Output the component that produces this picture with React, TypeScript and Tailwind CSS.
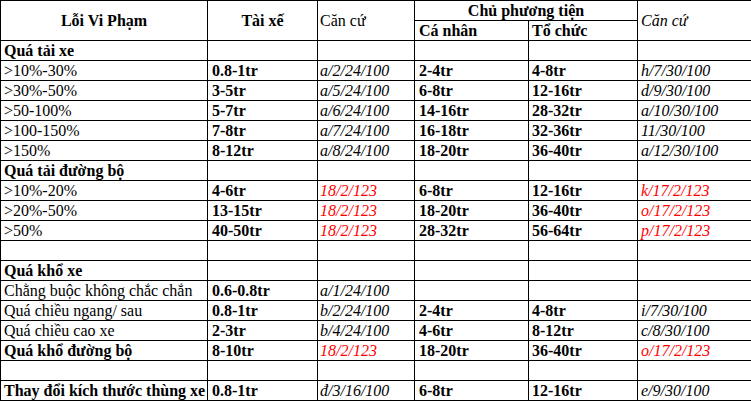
type Row = {
  name: string;
  nameBold?: boolean;
  driver?: string;
  ref?: string;
  refRed?: boolean;
  person?: string;
  org?: string;
  ref2?: string;
  ref2Red?: boolean;
};

const rows: Row[] = [
  { name: "Quá tải xe", nameBold: true },
  { name: ">10%-30%", driver: "0.8-1tr", ref: "a/2/24/100", person: "2-4tr", org: "4-8tr", ref2: "h/7/30/100" },
  { name: ">30%-50%", driver: "3-5tr", ref: "a/5/24/100", person: "6-8tr", org: "12-16tr", ref2: "d/9/30/100" },
  { name: ">50-100%", driver: "5-7tr", ref: "a/6/24/100", person: "14-16tr", org: "28-32tr", ref2: "a/10/30/100" },
  { name: ">100-150%", driver: "7-8tr", ref: "a/7/24/100", person: "16-18tr", org: "32-36tr", ref2: "11/30/100" },
  { name: ">150%", driver: "8-12tr", ref: "a/8/24/100", person: "18-20tr", org: "36-40tr", ref2: "a/12/30/100" },
  { name: "Quá tải đường bộ", nameBold: true },
  { name: ">10%-20%", driver: "4-6tr", ref: "18/2/123", refRed: true, person: "6-8tr", org: "12-16tr", ref2: "k/17/2/123", ref2Red: true },
  { name: ">20%-50%", driver: "13-15tr", ref: "18/2/123", refRed: true, person: "18-20tr", org: "36-40tr", ref2: "o/17/2/123", ref2Red: true },
  { name: ">50%", driver: "40-50tr", ref: "18/2/123", refRed: true, person: "28-32tr", org: "56-64tr", ref2: "p/17/2/123", ref2Red: true },
  { name: "" },
  { name: "Quá khổ xe", nameBold: true },
  { name: "Chằng buộc không chắc chắn", driver: "0.6-0.8tr", ref: "a/1/24/100" },
  { name: "Quá chiều ngang/ sau", driver: "0.8-1tr", ref: "b/2/24/100", person: "2-4tr", org: "4-8tr", ref2: "i/7/30/100" },
  { name: "Quá chiều cao xe", driver: "2-3tr", ref: "b/4/24/100", person: "4-6tr", org: "8-12tr", ref2: "c/8/30/100" },
  { name: "Quá khổ đường bộ", nameBold: true, driver: "8-10tr", ref: "18/2/123", refRed: true, person: "18-20tr", org: "36-40tr", ref2: "o/17/2/123", ref2Red: true },
  { name: "" },
  { name: "Thay đổi kích thước thùng xe", nameBold: true, driver: "0.8-1tr", ref: "đ/3/16/100", person: "6-8tr", org: "12-16tr", ref2: "e/9/30/100" },
];

const cell = "border border-black h-[20px] p-0 align-middle whitespace-nowrap overflow-hidden";

export default function App() {
  return (
    <div className="w-[751px] h-[401px] bg-white text-black overflow-hidden" style={{ fontFamily: '"Liberation Serif", "Times New Roman", serif' }}>
      <table className="table-fixed border-collapse text-[16px] leading-[19px] w-[751px]">
        <colgroup>
          <col className="w-[207px]" />
          <col className="w-[110px]" />
          <col className="w-[97px]" />
          <col className="w-[114px]" />
          <col className="w-[109px]" />
          <col className="w-[114px]" />
        </colgroup>
        <thead>
          <tr>
            <th rowSpan={2} className={`${cell} text-center font-bold`}>Lỗi Vi Phạm</th>
            <th rowSpan={2} className={`${cell} text-center font-bold`}>Tài xế</th>
            <th rowSpan={2} className={`${cell} text-left font-normal pl-[2px]`}>Căn cứ</th>
            <th colSpan={2} className={`${cell} text-center font-bold`}>Chủ phương tiện</th>
            <th rowSpan={2} className={`${cell} text-left font-normal italic pl-[3px]`}>Căn cứ</th>
          </tr>
          <tr>
            <th className={`${cell} text-left font-bold pl-[4px]`}>Cá nhân</th>
            <th className={`${cell} text-left font-bold pl-[3px]`}>Tổ chức</th>
          </tr>
        </thead>
        <tbody>
          {rows.map((r, i) => (
            <tr key={i}>
              <td className={`${cell} pl-[3px] ${r.nameBold ? "font-bold" : ""}`}>{r.name}</td>
              <td className={`${cell} pl-[4px] font-bold`}>{r.driver}</td>
              <td className={`${cell} pl-[2px] italic ${r.refRed ? "text-[#ff0000]" : ""}`}>{r.ref}</td>
              <td className={`${cell} pl-[4px] font-bold`}>{r.person}</td>
              <td className={`${cell} pl-[3px] font-bold`}>{r.org}</td>
              <td className={`${cell} pl-[3px] italic ${r.ref2Red ? "text-[#ff0000]" : ""}`}>{r.ref2}</td>
            </tr>
          ))}
        </tbody>
      </table>
    </div>
  );
}
